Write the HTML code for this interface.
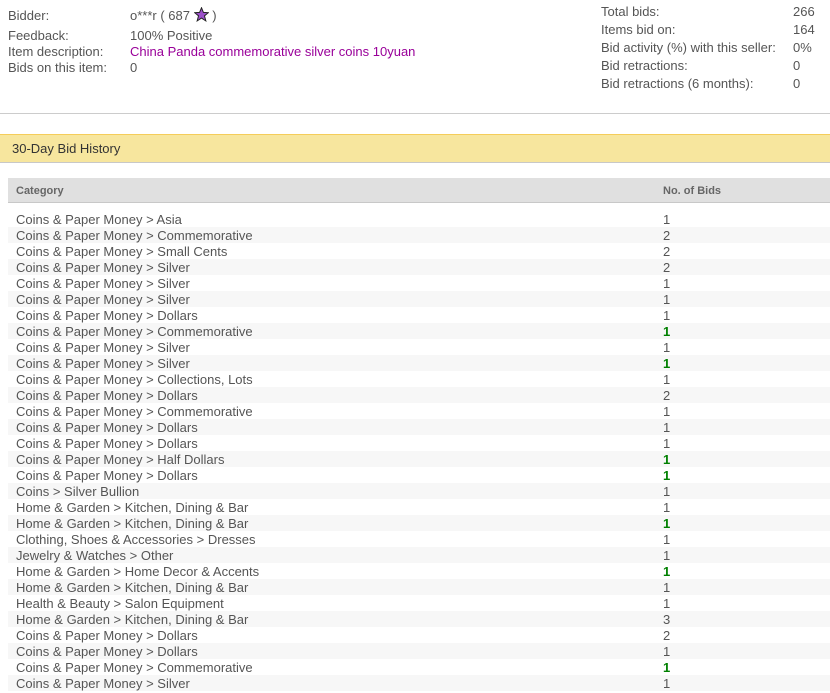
<!DOCTYPE html>
<html><head><meta charset="utf-8"><style>
body{margin:0;width:830px;height:693px;overflow:hidden;background:#fff;font-family:"Liberation Sans",Arial,sans-serif;font-size:13px;color:#555;position:relative;letter-spacing:0}
.a{position:absolute;white-space:nowrap;line-height:16px}
.row{position:absolute;left:8px;width:822px;height:16px}
.s{background:#f7f7f7}
.c{position:absolute;left:8px;top:1px;line-height:16px;white-space:nowrap}
.n{position:absolute;left:655px;top:1px;line-height:16px}
.g{color:#008000;font-weight:bold}
</style></head><body>
<div class="a" style="left:8px;top:8px">Bidder:</div>
<div class="a" style="left:130px;top:7px">o***r ( 687 <svg width="15" height="15" viewBox="0 0 20 20" style="vertical-align:-2px"><polygon points="10,1 12.6,7.2 19,7.6 14,11.8 15.8,18.5 10,14.8 4.2,18.5 6,11.8 1,7.6 7.4,7.2" fill="#9b4fc9" stroke="#222" stroke-width="1.3"/></svg> )</div>
<div class="a" style="left:8px;top:28px">Feedback:</div>
<div class="a" style="left:130px;top:28px">100% Positive</div>
<div class="a" style="left:8px;top:44px">Item description:</div>
<div class="a" style="left:130px;top:44px;color:#990099">China Panda commemorative silver coins 10yuan</div>
<div class="a" style="left:8px;top:60px">Bids on this item:</div>
<div class="a" style="left:130px;top:60px">0</div>

<div class="a" style="left:601px;top:4px">Total bids:</div><div class="a" style="left:793px;top:4px">266</div>
<div class="a" style="left:601px;top:22px">Items bid on:</div><div class="a" style="left:793px;top:22px">164</div>
<div class="a" style="left:601px;top:40px">Bid activity (%) with this seller:</div><div class="a" style="left:793px;top:40px">0%</div>
<div class="a" style="left:601px;top:58px">Bid retractions:</div><div class="a" style="left:793px;top:58px">0</div>
<div class="a" style="left:601px;top:76px">Bid retractions (6 months):</div><div class="a" style="left:793px;top:76px">0</div>

<div style="position:absolute;left:0;top:113px;width:830px;height:1px;background:#ccc"></div>
<div style="position:absolute;left:0;top:134px;width:830px;height:27px;background:#f7e69e;border-top:1px solid #f5cd5a;border-bottom:1px solid #c8c8c8"></div>
<div class="a" style="left:12px;top:141px;color:#333">30-Day Bid History</div>

<div style="position:absolute;left:8px;top:178px;width:822px;height:24px;background:#e0e0e0;border-bottom:1px solid #c8c8c8"></div>
<div class="a" style="left:16px;top:183px;font-size:11px;font-weight:bold;color:#666">Category</div>
<div class="a" style="left:663px;top:183px;font-size:11px;font-weight:bold;color:#666">No. of Bids</div>

<div class="row" style="top:211px"><span class="c">Coins &amp; Paper Money &gt; Asia</span><span class="n">1</span></div>
<div class="row s" style="top:227px"><span class="c">Coins &amp; Paper Money &gt; Commemorative</span><span class="n">2</span></div>
<div class="row" style="top:243px"><span class="c">Coins &amp; Paper Money &gt; Small Cents</span><span class="n">2</span></div>
<div class="row s" style="top:259px"><span class="c">Coins &amp; Paper Money &gt; Silver</span><span class="n">2</span></div>
<div class="row" style="top:275px"><span class="c">Coins &amp; Paper Money &gt; Silver</span><span class="n">1</span></div>
<div class="row s" style="top:291px"><span class="c">Coins &amp; Paper Money &gt; Silver</span><span class="n">1</span></div>
<div class="row" style="top:307px"><span class="c">Coins &amp; Paper Money &gt; Dollars</span><span class="n">1</span></div>
<div class="row s" style="top:323px"><span class="c">Coins &amp; Paper Money &gt; Commemorative</span><span class="n g">1</span></div>
<div class="row" style="top:339px"><span class="c">Coins &amp; Paper Money &gt; Silver</span><span class="n">1</span></div>
<div class="row s" style="top:355px"><span class="c">Coins &amp; Paper Money &gt; Silver</span><span class="n g">1</span></div>
<div class="row" style="top:371px"><span class="c">Coins &amp; Paper Money &gt; Collections, Lots</span><span class="n">1</span></div>
<div class="row s" style="top:387px"><span class="c">Coins &amp; Paper Money &gt; Dollars</span><span class="n">2</span></div>
<div class="row" style="top:403px"><span class="c">Coins &amp; Paper Money &gt; Commemorative</span><span class="n">1</span></div>
<div class="row s" style="top:419px"><span class="c">Coins &amp; Paper Money &gt; Dollars</span><span class="n">1</span></div>
<div class="row" style="top:435px"><span class="c">Coins &amp; Paper Money &gt; Dollars</span><span class="n">1</span></div>
<div class="row s" style="top:451px"><span class="c">Coins &amp; Paper Money &gt; Half Dollars</span><span class="n g">1</span></div>
<div class="row" style="top:467px"><span class="c">Coins &amp; Paper Money &gt; Dollars</span><span class="n g">1</span></div>
<div class="row s" style="top:483px"><span class="c">Coins &gt; Silver Bullion</span><span class="n">1</span></div>
<div class="row" style="top:499px"><span class="c">Home &amp; Garden &gt; Kitchen, Dining &amp; Bar</span><span class="n">1</span></div>
<div class="row s" style="top:515px"><span class="c">Home &amp; Garden &gt; Kitchen, Dining &amp; Bar</span><span class="n g">1</span></div>
<div class="row" style="top:531px"><span class="c">Clothing, Shoes &amp; Accessories &gt; Dresses</span><span class="n">1</span></div>
<div class="row s" style="top:547px"><span class="c">Jewelry &amp; Watches &gt; Other</span><span class="n">1</span></div>
<div class="row" style="top:563px"><span class="c">Home &amp; Garden &gt; Home Decor &amp; Accents</span><span class="n g">1</span></div>
<div class="row s" style="top:579px"><span class="c">Home &amp; Garden &gt; Kitchen, Dining &amp; Bar</span><span class="n">1</span></div>
<div class="row" style="top:595px"><span class="c">Health &amp; Beauty &gt; Salon Equipment</span><span class="n">1</span></div>
<div class="row s" style="top:611px"><span class="c">Home &amp; Garden &gt; Kitchen, Dining &amp; Bar</span><span class="n">3</span></div>
<div class="row" style="top:627px"><span class="c">Coins &amp; Paper Money &gt; Dollars</span><span class="n">2</span></div>
<div class="row s" style="top:643px"><span class="c">Coins &amp; Paper Money &gt; Dollars</span><span class="n">1</span></div>
<div class="row" style="top:659px"><span class="c">Coins &amp; Paper Money &gt; Commemorative</span><span class="n g">1</span></div>
<div class="row s" style="top:675px"><span class="c">Coins &amp; Paper Money &gt; Silver</span><span class="n">1</span></div>
</body></html>
